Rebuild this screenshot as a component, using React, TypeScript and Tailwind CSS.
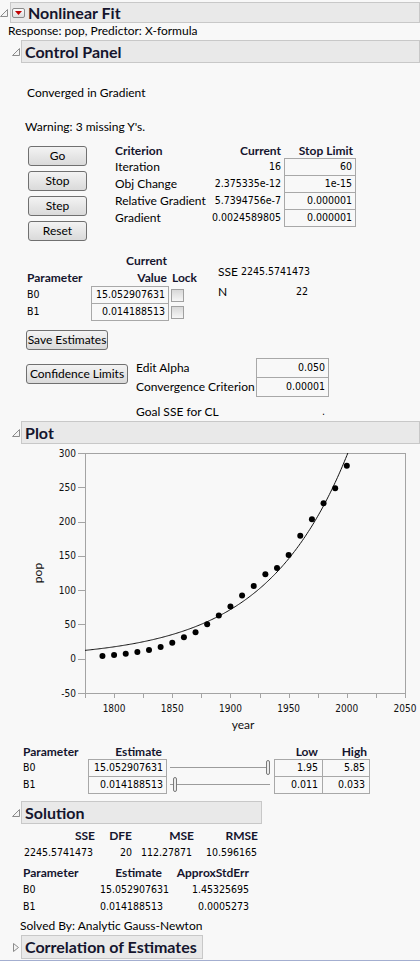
import React from "react";

const SANS = "font-['Lato','Noto_Sans',sans-serif] text-[12px]";
const NUM = "font-['DejaVu_Sans_Condensed','DejaVu_Sans',sans-serif] text-[10.5px]";
const BOLD = "font-bold text-[#15152e]";

const OpenIcon = () => (
  <svg width="9" height="9" viewBox="0 0 9 9">
    <path d="M7.5 0.5V7.5H0.5Z" fill="#f4f4f4" stroke="#8c8c8c" strokeLinejoin="round" />
  </svg>
);

const ClosedIcon = () => (
  <svg width="9" height="10" viewBox="0 0 9 10">
    <path d="M1.5 0.5L6.5 4.5L1.5 8.5Z" fill="#f4f4f4" stroke="#8c8c8c" strokeLinejoin="round" />
  </svg>
);

const Dropdown = () => (
  <div className="flex h-[10px] w-[13px] items-center justify-center rounded-[2px] border border-[#8a8a8a] bg-gradient-to-b from-[#fbfbfb] to-[#dedede]">
    <svg width="7" height="4" viewBox="0 0 7 4">
      <path d="M0 0H7L3.5 4Z" fill="#c00000" />
    </svg>
  </div>
);

type OutlineProps = {
  title: string;
  closed?: boolean;
  top?: boolean;
  boxClass: string;
};

function Outline({ title, closed, top, boxClass }: OutlineProps) {
  return (
    <div className="flex items-center">
      <div className={top ? "w-[10px] pt-[1px]" : "w-[21px] pl-[12px] pt-[1px]"}>
        {closed ? <ClosedIcon /> : <OpenIcon />}
      </div>
      <div className={`flex items-center border border-[#c8c8c8] bg-[#e9e9e9] ${boxClass}`}>
        {top && <Dropdown />}
        <span className={`font-['Lato','Noto_Sans',sans-serif] text-[16px] ${BOLD} ${top ? "ml-[3px]" : "ml-[3px]"}`}>
          {title}
        </span>
      </div>
    </div>
  );
}

function Btn({ label, w }: { label: string; w: string }) {
  return (
    <div
      className={`flex h-[20px] ${w} items-center justify-center rounded-[3px] border border-[#707070] bg-gradient-to-b from-[#f3f3f3] to-[#dadada] ${SANS}`}
    >
      {label}
    </div>
  );
}

function Cell({ children, w, extra = "" }: { children: React.ReactNode; w: string; extra?: string }) {
  return (
    <div className={`flex h-[18px] ${w} items-center justify-end border border-[#a8a8a8] pr-[3px] ${NUM} ${extra}`}>
      {children}
    </div>
  );
}

const Check = () => (
  <div className="h-[13px] w-[13px] border border-[#a0a0a0] bg-gradient-to-b from-[#d8d8d8] to-[#f6f6f6]" />
);

const criteria = [
  ["Iteration", "16", "60"],
  ["Obj Change", "2.375335e-12", "1e-15"],
  ["Relative Gradient", "5.7394756e-7", "0.000001"],
  ["Gradient", "0.0024589805", "0.000001"],
];

const years = [1790, 1800, 1810, 1820, 1830, 1840, 1850, 1860, 1870, 1880, 1890, 1900, 1910, 1920, 1930, 1940, 1950, 1960, 1970, 1980, 1990, 2000];
const pops = [3.929, 5.308, 7.24, 9.638, 12.866, 17.069, 23.192, 31.443, 38.558, 50.189, 62.98, 76.212, 92.228, 106.022, 123.203, 132.165, 151.326, 179.323, 203.302, 226.542, 248.71, 281.422];

const sx = (yr: number) => 85 + ((yr - 1775) * 320) / 275;
const sy = (p: number) => 453 + ((300 - p) * 240) / 350;

function Chart() {
  const curve: string[] = [];
  for (let yr = 1775; yr <= 2003; yr += 1) {
    const p = 15.052907631 * Math.exp(0.014188513 * (yr - 1790));
    curve.push(`${curve.length ? "L" : "M"}${sx(yr).toFixed(2)} ${sy(p).toFixed(2)}`);
  }
  const yTicks = [300, 250, 200, 150, 100, 50, 0, -50];
  const xMinor = [1775, 1800, 1825, 1850, 1875, 1900, 1925, 1950, 1975, 2000, 2025, 2050];
  const xLabels = [1800, 1850, 1900, 1950, 2000, 2050];
  return (
    <svg width="420" height="291" viewBox="0 444 420 291" className="block">
      <defs>
        <clipPath id="frame">
          <rect x="85" y="453" width="320" height="240" />
        </clipPath>
      </defs>
      <rect x="85.5" y="453.5" width="320" height="240" fill="none" stroke="#a4a4a4" />
      {yTicks.map((v) => (
        <g key={v}>
          <line x1="78" x2="85" y1={Math.round(sy(v)) + 0.5} y2={Math.round(sy(v)) + 0.5} stroke="#a4a4a4" />
          <text
            x="76"
            y={sy(v) + 3.5}
            textAnchor="end"
            fontSize="10"
            fontFamily="'DejaVu Sans Condensed', sans-serif"
            fill="#111"
          >
            {v}
          </text>
        </g>
      ))}
      {xMinor.map((yr) => (
        <line key={yr} x1={Math.round(sx(yr)) + 0.5} x2={Math.round(sx(yr)) + 0.5} y1="694" y2="698" stroke="#a4a4a4" />
      ))}
      {xLabels.map((yr) => (
        <text
          key={yr}
          x={sx(yr)}
          y="712"
          textAnchor="middle"
          fontSize="10"
          fontFamily="'DejaVu Sans Condensed', sans-serif"
          fill="#111"
        >
          {yr}
        </text>
      ))}
      <text x="243" y="729" textAnchor="middle" fontSize="12" fontFamily="Lato, sans-serif" fill="#111">
        year
      </text>
      <text
        x="42"
        y="573"
        textAnchor="middle"
        fontSize="12"
        fontFamily="Lato, sans-serif"
        fill="#111"
        transform="rotate(-90 42 573)"
      >
        pop
      </text>
      <g clipPath="url(#frame)">
        <path d={curve.join(" ")} fill="none" stroke="#111" strokeWidth="1" />
      </g>
      {years.map((yr, i) => (
        <circle key={yr} cx={sx(yr)} cy={sy(pops[i])} r="3" fill="#000" />
      ))}
    </svg>
  );
}

function Slider({ pos }: { pos: number }) {
  return (
    <div className="relative h-[18px] w-[107px]">
      <div className="absolute left-[3px] top-[8px] h-px w-[100px] bg-[#9c9c9c]" />
      <div
        className="absolute top-[1px] h-[15px] w-[4px] rounded-[2px] border border-[#7a7a7a] bg-[#ececec]"
        style={{ left: pos }}
      />
    </div>
  );
}

export default function App() {
  return (
    <div className={`flex h-[961px] w-[420px] flex-col overflow-hidden bg-[#f8f8f8] text-black ${SANS}`}>
      <div className="mt-[2px]">
        <Outline title="Nonlinear Fit" top boxClass="h-[21px] w-[410px] pl-[1px]" />
      </div>
      <div className="mt-[1px] pl-[8px] leading-[14px]">Response: pop, Predictor: X-formula</div>
      <div className="mt-[2px]">
        <Outline title="Control Panel" boxClass="h-[23px] w-[399px]" />
      </div>

      <div className="mt-[23px] pl-[27px] leading-[14px]">Converged in Gradient</div>
      <div className="mt-[20px] pl-[25px] leading-[14px]">Warning: 3 missing Y's.</div>

      <div className="mt-[9px] flex pl-[28px]">
        <div className="mt-[3px] flex w-[59px] flex-col gap-[5px]">
          <Btn label="Go" w="w-[59px]" />
          <Btn label="Stop" w="w-[59px]" />
          <Btn label="Step" w="w-[59px]" />
          <Btn label="Reset" w="w-[59px]" />
        </div>
        <div className="ml-[28px] flex flex-col">
          <div className={`flex h-[15px] items-center ${BOLD}`}>
            <div className="w-[92px]">Criterion</div>
            <div className="w-[74px] text-right">Current</div>
            <div className="ml-[3px] w-[72px] pr-[3px] text-right">Stop Limit</div>
          </div>
          {criteria.map(([name, cur, lim], i) => (
            <div key={name} className={`flex items-center ${i ? "-mt-px" : ""}`}>
              <div className="w-[92px]">{name}</div>
              <div className={`w-[74px] text-right ${NUM}`}>{cur}</div>
              <Cell w="w-[72px]" extra="ml-[3px]">
                {lim}
              </Cell>
            </div>
          ))}
        </div>
      </div>

      <div className="mt-[13px] flex">
        <div className="w-[218px] pl-[27px]">
          <div className={`flex h-[14px] items-center ${BOLD}`}>
            <div className="w-[64px]" />
            <div className="w-[78px] pr-[2px] text-right">Current</div>
          </div>
          <div className={`mt-[3px] flex h-[14px] items-center ${BOLD}`}>
            <div className="w-[64px]">Parameter</div>
            <div className="w-[78px] pr-[2px] text-right">Value</div>
            <div className="ml-[3px]">Lock</div>
          </div>
          {[
            ["B0", "15.052907631"],
            ["B1", "0.014188513"],
          ].map(([p, v], i) => (
            <div key={p} className={`flex items-center ${i ? "-mt-px" : "mt-[1px]"}`}>
              <div className={`w-[64px] ${NUM}`}>{p}</div>
              <Cell w="w-[78px]" extra="pr-[2px]">
                {v}
              </Cell>
              <div className="ml-[2px]">
                <Check />
              </div>
            </div>
          ))}
        </div>
        <div className="mt-[8px] flex flex-col">
          <div className="flex h-[20px] items-center">
            <div className="w-[23px]">SSE</div>
            <div className={`w-[67px] text-right ${NUM}`}>2245.5741473</div>
          </div>
          <div className="flex h-[20px] items-center">
            <div className="w-[23px]">N</div>
            <div className={`w-[67px] text-right ${NUM}`}>22</div>
          </div>
        </div>
      </div>

      <div className="mt-[9px] pl-[26px]">
        <Btn label="Save Estimates" w="w-[82px]" />
      </div>

      <div className="mt-[8px] flex pl-[26px]">
        <div className="mt-[6px]">
          <Btn label="Confidence Limits" w="w-[102px]" />
        </div>
        <div className="ml-[8px] flex flex-col">
          <div className="flex items-center">
            <div className="w-[120px]">Edit Alpha</div>
            <div className="flex h-[20px] w-[73px] items-center justify-end border border-[#a8a8a8] pr-[3px]">
              <span className={NUM}>0.050</span>
            </div>
          </div>
          <div className="-mt-px flex items-center">
            <div className="w-[120px]">Convergence Criterion</div>
            <div className="flex h-[20px] w-[73px] items-center justify-end border border-[#a8a8a8] pr-[3px]">
              <span className={NUM}>0.00001</span>
            </div>
          </div>
          <div className="mt-[7px] flex h-[16px] items-center">
            <div className="w-[120px]">Goal SSE for CL</div>
            <div className={`w-[73px] pr-[4px] text-right ${NUM}`}>.</div>
          </div>
        </div>
      </div>

      <div className="mt-[1px]">
        <Outline title="Plot" boxClass="h-[23px] w-[399px]" />
      </div>
      <Chart />

      <div className="mt-[10px] flex flex-col pl-[23px]">
        <div className={`flex h-[14px] items-center ${BOLD}`}>
          <div className="w-[65px]">Parameter</div>
          <div className="w-[79px] pr-[5px] text-right">Estimate</div>
          <div className="w-[107px]" />
          <div className="w-[49px] pr-[5px] text-right">Low</div>
          <div className="w-[48px] pr-[4px] text-right">High</div>
        </div>
        {[
          ["B0", "15.052907631", 99, "1.95", "5.85"],
          ["B1", "0.014188513", 6, "0.011", "0.033"],
        ].map(([p, v, pos, lo, hi], i) => (
          <div key={p as string} className={`flex items-center ${i ? "-mt-px" : ""}`}>
            <div className={`w-[65px] ${NUM}`}>{p}</div>
            <Cell w="w-[79px]" extra="pr-[1px]">
              {v}
            </Cell>
            <Slider pos={pos as number} />
            <Cell w="w-[49px]" extra="pr-[4px]">
              {lo}
            </Cell>
            <Cell w="w-[48px]" extra="-ml-px pr-[4px]">
              {hi}
            </Cell>
          </div>
        ))}
      </div>

      <div className="mt-[7px]">
        <Outline title="Solution" boxClass="h-[23px] w-[241px]" />
      </div>

      <div className="mt-[5px] pl-[20px]">
        <div className={`flex h-[14px] items-center ${BOLD}`}>
          <div className="w-[75px] text-right">SSE</div>
          <div className="w-[37px] text-right">DFE</div>
          <div className="w-[62px] text-right">MSE</div>
          <div className="w-[64px] text-right">RMSE</div>
        </div>
        <div className={`mt-[3px] flex h-[14px] items-center ${NUM}`}>
          <div className="w-[73px] text-right">2245.5741473</div>
          <div className="w-[39px] text-right">20</div>
          <div className="w-[60px] text-right">112.27871</div>
          <div className="w-[65px] text-right">10.596165</div>
        </div>
      </div>

      <div className="mt-[6px] pl-[23px]">
        <div className={`flex h-[14px] items-center ${BOLD}`}>
          <div className="w-[77px]">Parameter</div>
          <div className="w-[62px] text-right">Estimate</div>
          <div className="w-[87px] text-right">ApproxStdErr</div>
        </div>
        {[
          ["B0", "15.052907631", "1.45325695"],
          ["B1", "0.014188513", "0.0005273"],
        ].map(([p, e, s]) => (
          <div key={p} className={`mt-[3px] flex h-[14px] items-center ${NUM}`}>
            <div className="w-[77px]">{p}</div>
            <div className="w-[63px] text-right">{e}</div>
            <div className="w-[86px] text-right">{s}</div>
          </div>
        ))}
      </div>

      <div className="mt-[5px] pl-[20px] leading-[14px]">Solved By: Analytic Gauss-Newton</div>

      <div className="mt-[2px]">
        <Outline title="Correlation of Estimates" closed boxClass="h-[24px] w-[182px]" />
      </div>
      <div className="flex-1" />
      <div className="h-px w-full bg-[#a3aed0]" />
    </div>
  );
}
